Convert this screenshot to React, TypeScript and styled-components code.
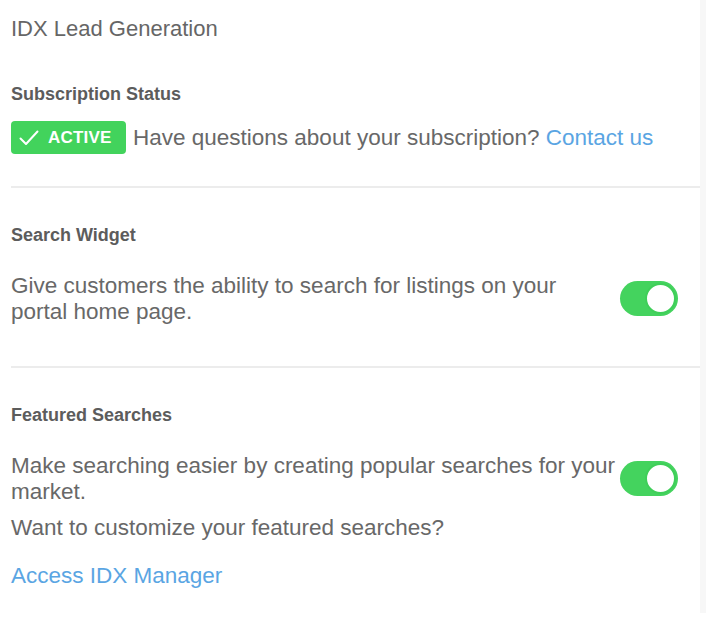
import React from 'react';
import styled, { createGlobalStyle } from 'styled-components';

const GlobalStyle = createGlobalStyle`
  body {
    margin: 0;
    background: #fff;
    font-family: "Liberation Sans", Arial, sans-serif;
    -webkit-font-smoothing: antialiased;
  }
`;

const Page = styled.div`
  display: flex;
  width: 706px;
`;

const Panel = styled.div`
  width: 700px;
  padding: 0 0 0 11px;
  box-sizing: border-box;
  background: #fff;
`;

const Strip = styled.div`
  width: 6px;
  height: 613px;
  background: #f7f7f7;
`;

const Title = styled.h1`
  margin: 0;
  padding-top: 16px;
  height: 47px;
  box-sizing: border-box;
  font-size: 22px;
  font-weight: 400;
  line-height: 26px;
  color: #666;
`;

const Section = styled.section<{ $last?: boolean }>`
  padding: 37px 22px 0 0;
  border-bottom: ${(p) => (p.$last ? 'none' : '2px solid #ececec')};
`;

const Heading = styled.h2`
  margin: 0;
  font-size: 18px;
  font-weight: 700;
  line-height: 20px;
  color: #5c5c5c;
`;

const StatusRow = styled.div`
  display: flex;
  align-items: center;
  gap: 7px;
  margin: 17px 0 32px;
`;

const Badge = styled.span`
  display: inline-flex;
  flex: none;
  align-items: center;
  gap: 9px;
  height: 33px;
  width: 115px;
  padding-left: 8px;
  box-sizing: border-box;
  border-radius: 4px;
  background: #42d35c;
  color: #fff;
  font-size: 17px;
  font-weight: 700;
  letter-spacing: 0.2px;
`;

const Text = styled.p`
  margin: 0;
  font-size: 22.5px;
  line-height: 26px;
  color: #686868;
  white-space: nowrap;
`;

const Para = styled(Text)`
  white-space: normal;
`;

const Link = styled.a`
  color: #5aa5e3;
  text-decoration: none;
`;

const SettingRow = styled.div<{ $bottom: number }>`
  display: flex;
  align-items: flex-start;
  gap: 2px;
  margin: 28px 0 ${(p) => p.$bottom}px;
`;

const Grow = styled.div`
  flex: 1;
  min-width: 0;
`;

const Toggle = styled.span<{ $top: number }>`
  position: relative;
  flex: none;
  width: 58px;
  height: 35px;
  margin-top: ${(p) => p.$top}px;
  border-radius: 18px;
  background: #44d35e;

  &::after {
    content: '';
    position: absolute;
    right: 2px;
    top: 2px;
    width: 27px;
    height: 27px;
    border-radius: 50%;
    background: #fff;
    border: 2px solid #3fcf59;
  }
`;

const Question = styled(Para)`
  margin-top: 10px;
`;

const Footer = styled(Text)`
  margin: 22px 0 0;
  padding-bottom: 30px;
`;

const Check = () => (
  <svg width="20" height="16" viewBox="0 0 20 16" fill="none">
    <path d="M1.5 8.5 L7 14 L18.5 1.5" stroke="#fff" strokeWidth="2" strokeLinecap="round" strokeLinejoin="round" />
  </svg>
);

export default function App() {
  return (
    <Page>
      <GlobalStyle />
      <Panel>
        <Title>IDX Lead Generation</Title>

        <Section>
          <Heading>Subscription Status</Heading>
          <StatusRow>
            <Badge>
              <Check />
              ACTIVE
            </Badge>
            <Text>
              Have questions about your subscription? <Link href="#">Contact us</Link>
            </Text>
          </StatusRow>
        </Section>

        <Section>
          <Heading>Search Widget</Heading>
          <SettingRow $bottom={41}>
            <Grow>
              <Para>Give customers the ability to search for listings on your portal home page.</Para>
            </Grow>
            <Toggle $top={8} />
          </SettingRow>
        </Section>

        <Section $last>
          <Heading>Featured Searches</Heading>
          <SettingRow $bottom={0}>
            <Grow>
              <Para>Make searching easier by creating popular searches for your market.</Para>
              <Question>Want to customize your featured searches?</Question>
            </Grow>
            <Toggle $top={8} />
          </SettingRow>
          <Footer>
            <Link href="#">Access IDX Manager</Link>
          </Footer>
        </Section>
      </Panel>
      <Strip />
    </Page>
  );
}
